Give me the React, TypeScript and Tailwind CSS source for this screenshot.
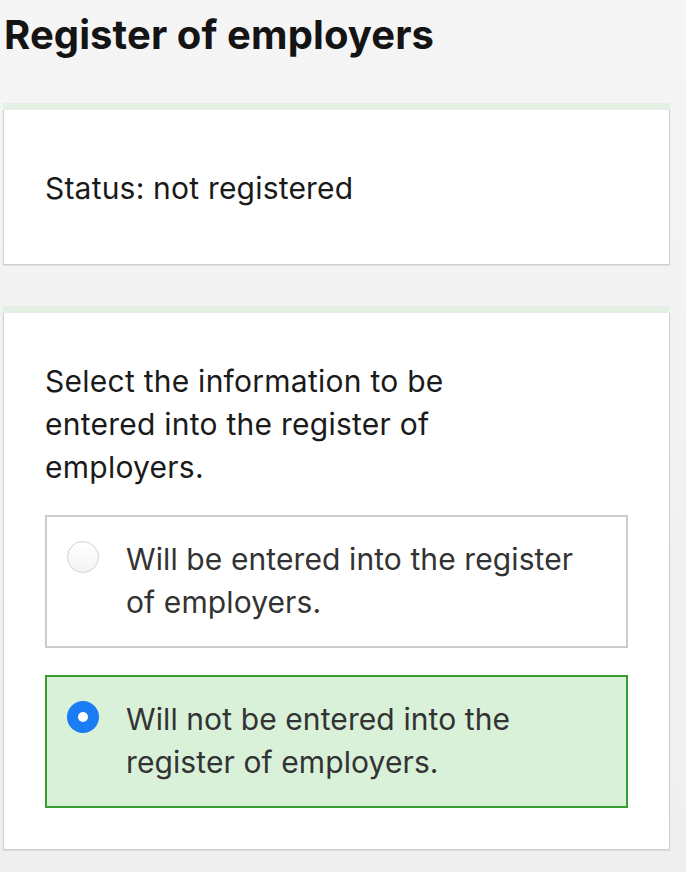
import { useState } from 'react';

const OPTIONS = [
  { id: 'enter', label: 'Will be entered into the register of employers.' },
  { id: 'skip', label: 'Will not be entered into the register of employers.' },
];

function Radio({ checked }: { checked: boolean }) {
  if (checked) {
    return (
      <span className="mt-[3px] flex h-[32px] w-[32px] shrink-0 items-center justify-center rounded-full bg-[#1c7cf4]">
        <span className="h-[10px] w-[10px] rounded-full bg-white" />
      </span>
    );
  }
  return (
    <span className="mt-[3px] h-[32px] w-[32px] shrink-0 rounded-full border border-[#d2d2d2] bg-gradient-to-b from-white to-[#f4f4f4]" />
  );
}

export default function App() {
  const [selected, setSelected] = useState('skip');

  return (
    <div className="min-h-[872px] w-[686px] bg-gradient-to-b from-[#f5f5f5] to-[#efefef] pt-[11px] font-['Inter','Liberation_Sans',sans-serif]">
      <h1 className="ml-[4px] text-[40px] leading-[48px] font-bold tracking-[0.1px] text-[#141414]">
        Register of employers
      </h1>

      <div className="mt-[44px] w-[667px] ml-[3px] border-t-[7px] border-[#e4f0e3]">
        <div className="border border-t-0 border-[#cfcfcf] bg-white px-[41px] pt-[57px] pb-[54px] shadow-[0_1px_1px_rgba(0,0,0,0.08)]">
          <p className="text-[30px] leading-[43px] tracking-[0.2px] text-[#1a1a1a]">Status: not registered</p>
        </div>
      </div>

      <div className="mt-[41px] w-[667px] ml-[3px] border-t-[7px] border-[#e4f0e3]">
        <div className="border border-t-0 border-[#cfcfcf] bg-white px-[41px] pt-[47px] pb-[41px] shadow-[0_1px_1px_rgba(0,0,0,0.08)]">
          <p className="max-w-[420px] text-[30px] leading-[43px] tracking-[0.25px] text-[#1a1a1a]">
            Select the information to be entered into the register of employers.
          </p>
          <div className="mt-[26px] flex flex-col gap-[27px]">
            {OPTIONS.map((opt) => {
              const checked = selected === opt.id;
              return (
                <button
                  key={opt.id}
                  type="button"
                  onClick={() => setSelected(opt.id)}
                  className={
                    checked
                      ? 'flex gap-[27px] border-2 border-[#3b9c31] bg-[#d9f0d9] px-[20px] pt-[21px] pb-[22px] text-left'
                      : 'flex gap-[27px] border-2 border-[#cccccc] bg-white px-[20px] pt-[21px] pb-[22px] text-left'
                  }
                >
                  <Radio checked={checked} />
                  <span className="text-[30px] leading-[43px] tracking-[0.1px] text-[#333333]">{opt.label}</span>
                </button>
              );
            })}
          </div>
        </div>
      </div>
    </div>
  );
}
